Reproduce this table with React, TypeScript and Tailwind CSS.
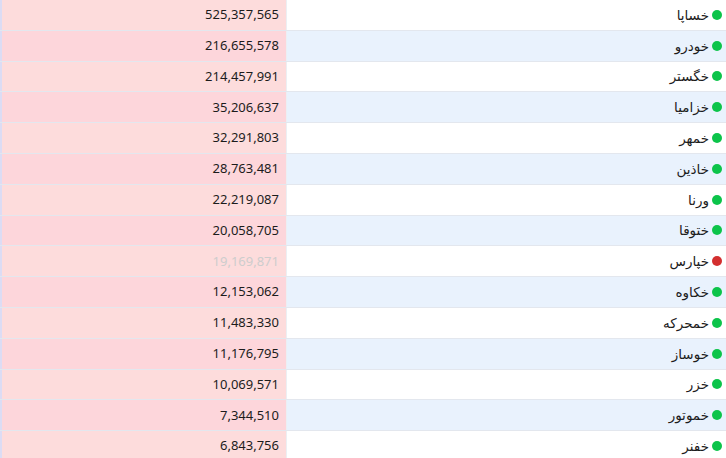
import React from 'react';

const rows = [
  { name: 'خساپا', value: '525,357,565', up: true },
  { name: 'خودرو', value: '216,655,578', up: true },
  { name: 'خگستر', value: '214,457,991', up: true },
  { name: 'خزامیا', value: '35,206,637', up: true },
  { name: 'خمهر', value: '32,291,803', up: true },
  { name: 'خاذین', value: '28,763,481', up: true },
  { name: 'ورنا', value: '22,219,087', up: true },
  { name: 'ختوقا', value: '20,058,705', up: true },
  { name: 'خپارس', value: '19,169,871', up: false },
  { name: 'خکاوه', value: '12,153,062', up: true },
  { name: 'خمحرکه', value: '11,483,330', up: true },
  { name: 'خوساز', value: '11,176,795', up: true },
  { name: 'خزر', value: '10,069,571', up: true },
  { name: 'خموتور', value: '7,344,510', up: true },
  { name: 'خفنر', value: '6,843,756', up: true },
];

const App = () => {
  return (
    <div className="w-[726px] h-[458px] overflow-hidden bg-white font-['Noto_Sans','DejaVu_Sans',sans-serif] text-[13px] text-[#1c1c1c]">
      {rows.map((row, i) => (
        <div key={row.name} className="flex h-[30.8px] border-b border-[#e3e7ee]">
          <div
            className={
              'w-[286px] flex items-center justify-end pr-[7px] border-l-2 border-[#dcdcf4] ' +
              (i % 2 === 0 ? 'bg-[#fddcdc]' : 'bg-[#fdd6db]') +
              (row.up ? '' : ' text-[#cdcdcd]')
            }
          >
            {row.value}
          </div>
          <div
            className={
              'flex-1 flex items-center justify-end pr-[4px] gap-[3px] border-l border-[#eceff3] ' +
              (i % 2 === 0 ? 'bg-white' : 'bg-[#e9f2fd]')
            }
          >
            <span dir="rtl" className="font-['DejaVu_Sans',sans-serif] text-[13.5px]">{row.name}</span>
            <span className={'w-[10px] h-[10px] rounded-full ' + (row.up ? 'bg-[#0cc44a]' : 'bg-[#d32f2f]')} />
          </div>
        </div>
      ))}
    </div>
  );
};

export default App;
